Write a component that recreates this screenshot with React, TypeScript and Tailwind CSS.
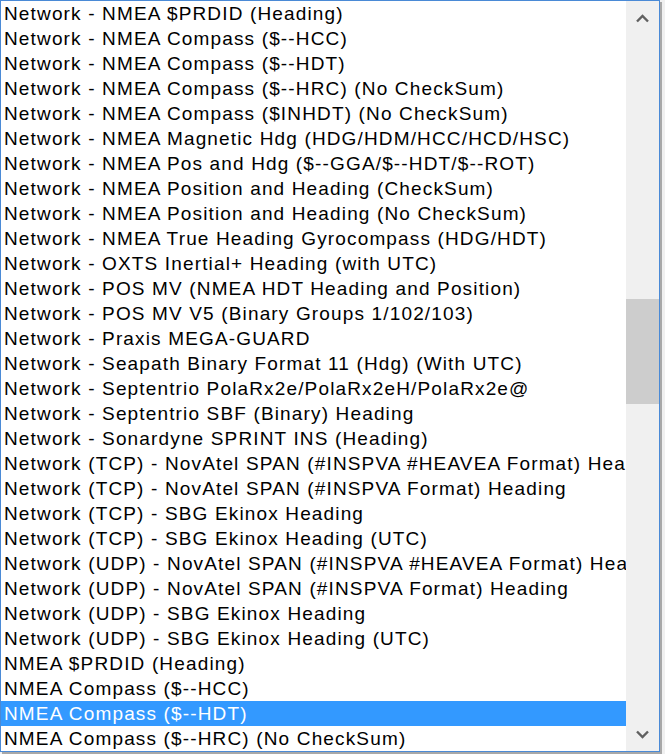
import React from 'react';

const items = [
  'Network - NMEA $PRDID (Heading)',
  'Network - NMEA Compass ($--HCC)',
  'Network - NMEA Compass ($--HDT)',
  'Network - NMEA Compass ($--HRC) (No CheckSum)',
  'Network - NMEA Compass ($INHDT) (No CheckSum)',
  'Network - NMEA Magnetic Hdg (HDG/HDM/HCC/HCD/HSC)',
  'Network - NMEA Pos and Hdg ($--GGA/$--HDT/$--ROT)',
  'Network - NMEA Position and Heading (CheckSum)',
  'Network - NMEA Position and Heading (No CheckSum)',
  'Network - NMEA True Heading Gyrocompass (HDG/HDT)',
  'Network - OXTS Inertial+ Heading (with UTC)',
  'Network - POS MV (NMEA HDT Heading and Position)',
  'Network - POS MV V5 (Binary Groups 1/102/103)',
  'Network - Praxis MEGA-GUARD',
  'Network - Seapath Binary Format 11 (Hdg) (With UTC)',
  'Network - Septentrio PolaRx2e/PolaRx2eH/PolaRx2e@',
  'Network - Septentrio SBF (Binary) Heading',
  'Network - Sonardyne SPRINT INS (Heading)',
  'Network (TCP) - NovAtel SPAN (#INSPVA #HEAVEA Format) Heading',
  'Network (TCP) - NovAtel SPAN (#INSPVA Format) Heading',
  'Network (TCP) - SBG Ekinox Heading',
  'Network (TCP) - SBG Ekinox Heading (UTC)',
  'Network (UDP) - NovAtel SPAN (#INSPVA #HEAVEA Format) Heading',
  'Network (UDP) - NovAtel SPAN (#INSPVA Format) Heading',
  'Network (UDP) - SBG Ekinox Heading',
  'Network (UDP) - SBG Ekinox Heading (UTC)',
  'NMEA $PRDID (Heading)',
  'NMEA Compass ($--HCC)',
  'NMEA Compass ($--HDT)',
  'NMEA Compass ($--HRC) (No CheckSum)',
];

const selected = 28;

const Chevron: React.FC<{ down?: boolean }> = ({ down }) => (
  <svg width="13" height="9" viewBox="0 0 13 9" className="block">
    <path
      d={down ? 'M1 1.5 L6.5 7 L12 1.5' : 'M1 7.5 L6.5 2 L12 7.5'}
      fill="none"
      stroke="#606060"
      strokeWidth="2.4"
    />
  </svg>
);

export default function App() {
  return (
    <div className="w-[665px] h-[754px] bg-[#f0f0f0] overflow-hidden">
      <div className="flex w-[660px] h-[752px] border border-[#4a8ad6] bg-white shadow-[2px_2px_0_#a8a8a8]">
        <div className="w-[625px] flex flex-col overflow-hidden">
          {items.map((text, i) => (
            <div
              key={i}
              className={`h-[25px] shrink-0 pl-[3px] flex items-center whitespace-nowrap text-[19px] tracking-[1.15px] leading-[25px] font-['Liberation_Sans',Arial,sans-serif] ${
                i === selected ? 'bg-[#3399ff] text-white' : 'text-black'
              }`}
            >
              {text}
            </div>
          ))}
        </div>
        <div className="w-[33px] bg-[#f0f0f0] flex flex-col">
          <div className="h-[34px] flex items-center justify-center">
            <Chevron />
          </div>
          <div className="flex-1 flex flex-col">
            <div className="h-[264px]" />
            <div className="h-[105px] bg-[#cdcdcd]" />
          </div>
          <div className="h-[34px] flex items-center justify-center">
            <Chevron down />
          </div>
        </div>
      </div>
    </div>
  );
}
